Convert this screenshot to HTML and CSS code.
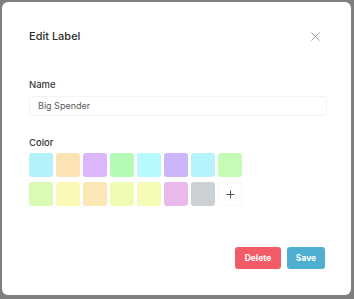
FILE: index.html
```html
<!DOCTYPE html>
<html>
<head>
<meta charset="utf-8">
<link rel="stylesheet" href="styles.css">
</head>
<body>
<div class="dialog">
  <div class="header">
    <h1 class="title">Edit Label</h1>
    <button class="close" aria-label="Close">
      <svg width="9" height="9" viewBox="0 0 9 9"><path d="M0.5 0.5L8.5 8.5M8.5 0.5L0.5 8.5" stroke="#9a9a9a" stroke-width="1" fill="none"/></svg>
    </button>
  </div>
  <div class="field name-field">
    <label class="label">Name</label>
    <div class="input">Big Spender</div>
  </div>
  <div class="field color-field">
    <label class="label">Color</label>
    <div class="swatches">
      <span class="sw" style="background:#b5f1fb"></span>
      <span class="sw" style="background:#fbe3b5"></span>
      <span class="sw" style="background:#dbb6fb"></span>
      <span class="sw" style="background:#b5fbb5"></span>
      <span class="sw" style="background:#b5fbfb"></span>
      <span class="sw" style="background:#cbb5fb"></span>
      <span class="sw" style="background:#b5f4fb"></span>
      <span class="sw" style="background:#c5fbb5"></span>
      <span class="sw" style="background:#dbfbb5"></span>
      <span class="sw" style="background:#fbf9b5"></span>
      <span class="sw" style="background:#fbe8b5"></span>
      <span class="sw" style="background:#f0fbb5"></span>
      <span class="sw" style="background:#f6fbb5"></span>
      <span class="sw" style="background:#ebb8eb"></span>
      <span class="sw" style="background:#cbd0d5"></span>
      <span class="sw add">
        <svg width="9" height="9" viewBox="0 0 9 9"><path d="M4.5 0.5V8.5M0.5 4.5H8.5" stroke="#444" stroke-width="0.9" fill="none"/></svg>
      </span>
    </div>
  </div>
  <div class="actions">
    <button class="btn delete">Delete</button>
    <button class="btn save">Save</button>
  </div>
</div>
</body>
</html>
```
FILE: styles.css
```css
* { box-sizing: border-box; }
html, body { margin: 0; padding: 0; }
body {
  background: #7f7f7f;
  width: 354px;
  height: 299px;
  padding: 2px 3px 4px 2px;
  font-family: "Inter", "Liberation Sans", sans-serif;
  color: #333;
}
.dialog {
  background: #fff;
  width: 349px;
  height: 293px;
  border-radius: 6px;
  padding: 0 24px 0 27px;
  display: flex;
  flex-direction: column;
}
.header {
  display: flex;
  align-items: center;
  justify-content: space-between;
  height: 20px;
  margin-top: 24px;
}
.title {
  margin: 0;
  font-size: 11px;
  font-weight: 500;
  color: #2e2e2e;
}
.close {
  border: 0;
  background: none;
  padding: 0;
  width: 9px;
  height: 9px;
  margin-right: 7px;
  display: flex;
}
.field {
  display: flex;
  flex-direction: column;
}
.name-field { margin-top: 33px; }
.label {
  font-size: 9.5px;
  font-weight: 500;
  color: #3a3a3a;
  line-height: 12px;
  margin-bottom: 5px;
}
.input {
  height: 20px;
  border: 1px solid #f3f3f3;
  border-radius: 3px;
  padding: 0 8px;
  font-size: 9px;
  line-height: 18px;
  color: #5a5a5a;
}
.color-field { margin-top: 21px; }
.color-field .label { margin-bottom: 4px; }
.swatches {
  display: grid;
  grid-template-columns: repeat(8, 24px);
  grid-auto-rows: 24px;
  column-gap: 3px;
  row-gap: 5px;
}
.sw {
  display: block;
  border-radius: 3px;
}
.add {
  background: #fff;
  border: 1px solid #f8f8f8;
  display: flex;
  align-items: center;
  justify-content: center;
}
.actions {
  display: flex;
  justify-content: flex-end;
  gap: 6px;
  margin-top: 41px;
  padding-right: 2px;
}
.btn {
  border: 0;
  height: 22px;
  border-radius: 3px;
  color: #fff;
  font-family: inherit;
  font-size: 8.5px;
  font-weight: 700;
  padding: 0;
}
.delete { background: #f35c66; width: 46px; }
.save { background: #4eafd1; width: 38px; }
```
